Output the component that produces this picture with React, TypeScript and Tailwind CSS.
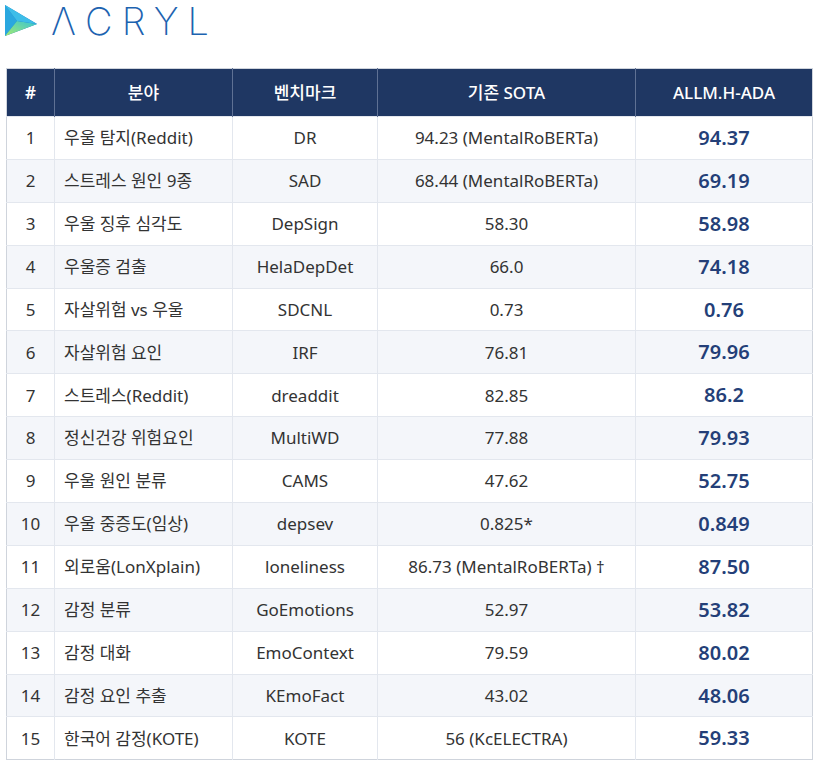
import React from "react";

const rows = [
  ["1", "우울 탐지(Reddit)", "DR", "94.23 (MentalRoBERTa)", "94.37"],
  ["2", "스트레스 원인 9종", "SAD", "68.44 (MentalRoBERTa)", "69.19"],
  ["3", "우울 징후 심각도", "DepSign", "58.30", "58.98"],
  ["4", "우울증 검출", "HelaDepDet", "66.0", "74.18"],
  ["5", "자살위험 vs 우울", "SDCNL", "0.73", "0.76"],
  ["6", "자살위험 요인", "IRF", "76.81", "79.96"],
  ["7", "스트레스(Reddit)", "dreaddit", "82.85", "86.2"],
  ["8", "정신건강 위험요인", "MultiWD", "77.88", "79.93"],
  ["9", "우울 원인 분류", "CAMS", "47.62", "52.75"],
  ["10", "우울 중증도(임상)", "depsev", "0.825*", "0.849"],
  ["11", "외로움(LonXplain)", "loneliness", "86.73 (MentalRoBERTa) †", "87.50"],
  ["12", "감정 분류", "GoEmotions", "52.97", "53.82"],
  ["13", "감정 대화", "EmoContext", "79.59", "80.02"],
  ["14", "감정 요인 추출", "KEmoFact", "43.02", "48.06"],
  ["15", "한국어 감정(KOTE)", "KOTE", "56 (KcELECTRA)", "59.33"],
];

function Logo() {
  return (
    <div className="flex items-center h-[46px] pl-[4px]">
      <svg width="34" height="34" viewBox="0 0 34 34" className="mt-[-6px]">
        <defs>
          <linearGradient id="lg1" x1="0" y1="0" x2="1" y2="1">
            <stop offset="0" stopColor="#1a8fd0" />
            <stop offset="1" stopColor="#1668b8" />
          </linearGradient>
          <linearGradient id="lg2" x1="0" y1="1" x2="1" y2="0">
            <stop offset="0" stopColor="#a6ec6e" />
            <stop offset="1" stopColor="#36c3d6" />
          </linearGradient>
        </defs>
        <polygon points="1,1 33,20 1,32" fill="url(#lg1)" />
        <polygon points="1,1 13,17 1,32" fill="#2aa7df" />
        <polygon points="13,17 33,20 1,32" fill="url(#lg2)" />
        <polygon points="1,1 33,20 13,17" fill="#3dbde8" />
      </svg>
      <span
        className="ml-[13px] mt-[-6px] text-[38px] leading-[46px] font-extralight tracking-[0.24em] text-[#1d63b0]"
        style={{ fontFamily: "Inter, 'Liberation Sans', sans-serif" }}
      >
        ΛCRYL
      </span>
    </div>
  );
}

export default function App() {
  return (
    <div
      className="w-[822px] h-[765px] bg-white pt-[1px]"
      style={{ fontFamily: "'Noto Sans', 'Noto Sans CJK KR', sans-serif" }}
    >
      <Logo />
      <div className="mt-[21px] pl-[6px]">
        <table className="w-[806px] table-fixed border-collapse border border-[#cfd4dc] text-[17px] text-[#333]">
          <colgroup>
            <col className="w-[48px]" />
            <col className="w-[178px]" />
            <col className="w-[145px]" />
            <col className="w-[258px]" />
            <col className="w-[177px]" />
          </colgroup>
          <thead>
            <tr className="h-[48px] bg-[#1f3763] text-white text-[17px] font-medium">
              <th className="border-r border-[#5f7194] text-center font-semibold">#</th>
              <th className="border-r border-[#5f7194] text-center font-medium">분야</th>
              <th className="border-r border-[#5f7194] text-center font-medium">벤치마크</th>
              <th className="border-r border-[#5f7194] text-center font-medium">기존 SOTA</th>
              <th className="text-center font-medium">ALLM.H-ADA</th>
            </tr>
          </thead>
          <tbody>
            {rows.map((r, i) => (
              <tr
                key={r[0]}
                className={`h-[42.9px] border-t border-[#e3e7ee] ${i % 2 === 1 ? "bg-[#f4f6fa]" : "bg-white"}`}
              >
                <td className="border-r border-[#e3e7ee] text-center">{r[0]}</td>
                <td className="border-r border-[#e3e7ee] pl-[9px] whitespace-nowrap">{r[1]}</td>
                <td className="border-r border-[#e3e7ee] text-center">{r[2]}</td>
                <td className="border-r border-[#e3e7ee] text-center whitespace-nowrap">{r[3]}</td>
                <td className="text-center text-[20px] font-semibold text-[#243f78]">{r[4]}</td>
              </tr>
            ))}
          </tbody>
        </table>
      </div>
    </div>
  );
}
